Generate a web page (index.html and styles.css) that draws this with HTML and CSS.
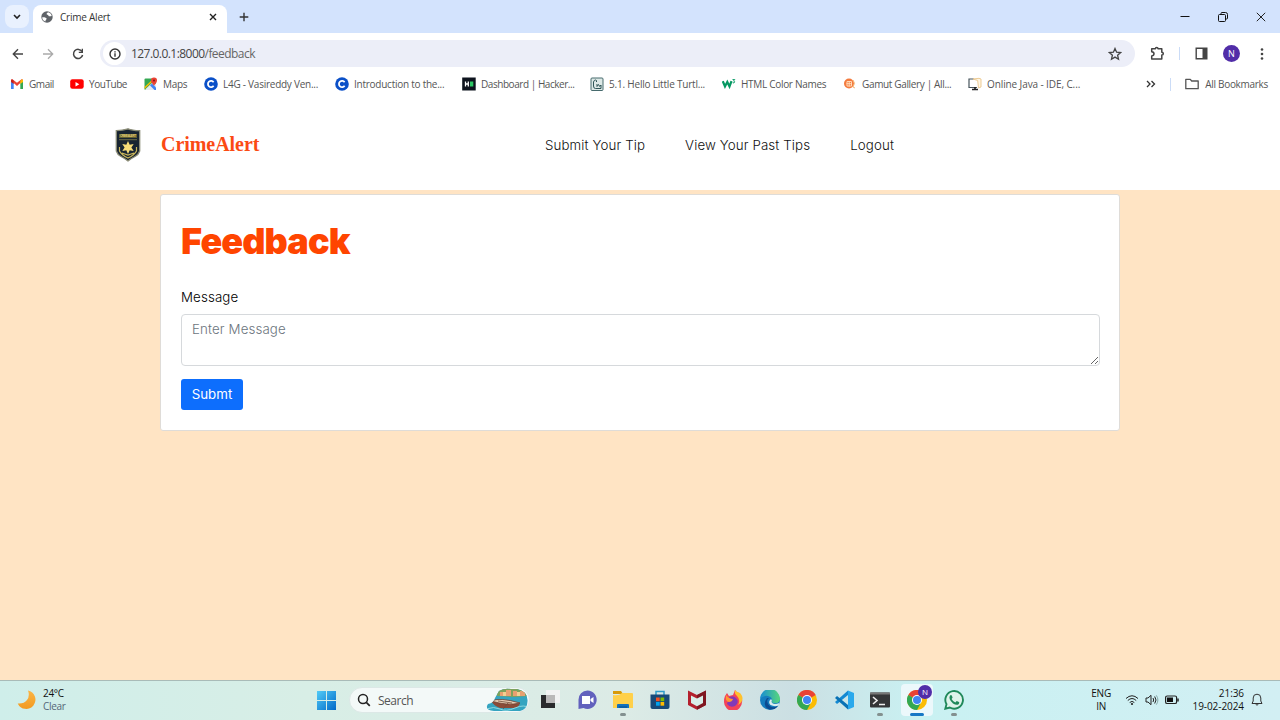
FILE: index.html
```html
<!DOCTYPE html>
<html lang="en">
<head>
<meta charset="utf-8">
<title>Crime Alert</title>
<link rel="stylesheet" href="styles.css">
</head>
<body>
<div class="screen">
  <div class="tabstrip">
    <div class="tab-search"><svg width="8" height="6" viewBox="0 0 8 6"><path d="M1 1l3 3 3-3" fill="none" stroke="#222" stroke-width="1.6"/></svg></div>
    <div class="tab">
      <svg class="globe" width="12" height="12" viewBox="0 0 12 12"><circle cx="6" cy="6" r="5.7" fill="#5f6368"/><path d="M1.2 6.300c1.900-.3 4.300.2 4.400 1.400.1 1-1.200 1-1 2.100l-.3.8C2.400 9.900 1.200 8.300 1.200 6.300zM7 1.300c-.5.8-1.500.7-1.400 1.700.1.900 1.600.4 1.800 1.400.2.900 1.500 1.300 3.300.5C10.400 3.100 9 1.600 7 1.300z" fill="#fff"/></svg>
      <span class="tab-title">Crime Alert</span>
      <svg class="tab-close" width="8" height="8" viewBox="0 0 8 8"><path d="M1 1l6 6M7 1l-6 6" stroke="#222" stroke-width="1.400"/></svg>
    </div>
    <svg class="new-tab" width="10" height="10" viewBox="0 0 10 10"><path d="M5 .7v8.600M.7 5h8.600" stroke="#333" stroke-width="1.400"/></svg>
    <div class="window-buttons">
      <svg width="10" height="10" viewBox="0 0 10 10"><path d="M.5 4.500h9" stroke="#111"/></svg>
      <svg width="10" height="10" viewBox="0 0 10 10"><path d="M3 2V1.500q0-1 1-1h3.500q2 0 2 2V6q0 1-1 1H8M1.500 2.500h5q1 0 1 1v5q0 1-1 1h-5q-1 0-1-1v-5q0-1 1-1z" fill="none" stroke="#111"/></svg>
      <svg width="10" height="10" viewBox="0 0 10 10"><path d="M.8.800l8.400 8.400M9.200.8L.8 9.200" stroke="#222"/></svg>
    </div>
  </div>

  <div class="toolbar">
    <svg class="nav-icon" width="12" height="12" viewBox="0 0 12 12"><path d="M11 6H1.500M6 1.300L1.300 6 6 10.700" fill="none" stroke="#444" stroke-width="1.400"/></svg>
    <svg class="nav-icon" width="12" height="12" viewBox="0 0 12 12"><path d="M1 6h9.500M6 1.300L10.700 6 6 10.700" fill="none" stroke="#aaa" stroke-width="1.300"/></svg>
    <svg class="nav-icon" width="12" height="12" viewBox="0 0 12 12"><path d="M10 3.500A4.600 4.600 0 1 0 10.600 7" fill="none" stroke="#444" stroke-width="1.500"/><path d="M11 .8V5H6.800V3.700H9.700V.8z" fill="#444"/></svg>
    <div class="omnibox">
      <span class="site-info"><svg width="12" height="12" viewBox="0 0 12 12"><circle cx="6" cy="6" r="5" fill="none" stroke="#333" stroke-width="1.400"/><path d="M6 5.300v3.400M6 3.200v1.200" stroke="#333" stroke-width="1.400"/></svg></span>
      <span class="url"><b>127.0.0.1:8000</b>/feedback</span>
      <svg class="star" width="14" height="14" viewBox="0 0 14 14"><path d="M7 1.500l1.600 3.700 4 .4-3 2.600.9 4L7 10.100l-3.500 2.100.9-4-3-2.600 4-.4z" fill="none" stroke="#444" stroke-width="1.300"/></svg>
    </div>
    <div class="tools">
      <svg class="puzzle" width="15" height="15" viewBox="0 0 15 15"><path d="M1.700 2.700h3.700q0-1.300 1.300-1.300T8 2.700h3.800v3.600q1.500 0 1.500 1.400t-1.500 1.400v4H1.700v-3.200q2.300-.4 2.300-2.200t-2.300-2z" fill="none" stroke="#444" stroke-width="1.500" stroke-linejoin="round"/></svg>
      <span class="divider"></span>
      <svg class="panel" width="13" height="13" viewBox="0 0 13 13"><path d="M1.200 1.200h10.600v10.600H1.200z" fill="none" stroke="#444" stroke-width="1.400"/><path d="M7.500 1h4.500v11H7.500z" fill="#444"/></svg>
      <span class="avatar">N</span>
      <svg class="dots" width="4" height="14" viewBox="0 0 4 14"><g fill="#444"><circle cx="2" cy="2.500" r="1.300"/><circle cx="2" cy="7" r="1.300"/><circle cx="2" cy="11.500" r="1.300"/></g></svg>
    </div>
  </div>

  <div class="bookmarks">
    <div class="bm bm-gmail"><svg width="14" height="14" viewBox="0 0 14 14"><path d="M1 3.500V12h2.700V6z" fill="#4285f4"/><path d="M10.300 6v6H13V3.500z" fill="#34a853"/><path d="M1 3.500q0-1.500 1.400-1.300L7 5.800l4.600-3.600Q13 2 13 3.500L7 9z" fill="#ea4335"/><path d="M1 3.500q0-1 1-1.300l1.700 1.500V7L1 5z" fill="#c5221f"/><path d="M10.300 3.700L12 2.200q1 .2 1 1.300V5l-2.700 2z" fill="#fbbc04"/></svg><span>Gmail</span></div>
    <div class="bm bm-youtube"><svg width="14" height="14" viewBox="0 0 14 14"><rect x=".2" y="2.300" width="13.500" height="9.500" rx="2.200" fill="#f00"/><path d="M5.500 5v4.400L9.300 7.200z" fill="#fff"/></svg><span>YouTube</span></div>
    <div class="bm bm-maps"><svg width="14" height="14" viewBox="0 0 14 14"><rect x=".5" y="1.500" width="11.500" height="11.500" rx="1" fill="#34a853"/><path d="M1 12.500L9 5l3 2v5q0 1-1 1H2z" fill="#e8eaed"/><path d="M6 8.500l2-2 4 4V13h-1.500z" fill="#4285f4"/><path d="M.5 10l7.500-7h2L.5 12z" fill="#fbbc04"/><path d="M10 .5a3 3 0 0 1 3 3.200C13 5.800 10.500 7 10 9 9.500 7 7 5.800 7 3.700A3 3 0 0 1 10 .5z" fill="#ea4335"/><circle cx="10" cy="3.600" r="1" fill="#811"/></svg><span>Maps</span></div>
    <div class="bm bm-l4g"><svg width="14" height="14" viewBox="0 0 14 14"><circle cx="7" cy="7" r="6.800" fill="#0b50c8"/><path d="M9.600 5.200a3.100 3.100 0 1 0 0 3.600" fill="none" stroke="#fff" stroke-width="1.800"/></svg><span>L4G - Vasireddy Ven...</span></div>
    <div class="bm bm-intro"><svg width="14" height="14" viewBox="0 0 14 14"><circle cx="7" cy="7" r="6.800" fill="#0b50c8"/><path d="M9.600 5.200a3.100 3.100 0 1 0 0 3.600" fill="none" stroke="#fff" stroke-width="1.800"/></svg><span>Introduction to the...</span></div>
    <div class="bm bm-hacker"><svg width="14" height="14" viewBox="0 0 14 14"><rect x=".2" y=".5" width="13.500" height="13" fill="#0e141e"/><path d="M3.500 4.500v5M6.300 4.500v5M3.500 7h2.800" stroke="#fff" stroke-width="1.300"/><rect x="8" y="4.500" width="3.300" height="5" fill="#2ec866"/></svg><span>Dashboard | Hacker...</span></div>
    <div class="bm bm-turtle"><svg width="14" height="14" viewBox="0 0 14 14"><rect x="1" y="1" width="12" height="12.500" rx="1" fill="#dde9e7" stroke="#466a6d"/><path d="M3.500 9V5q.5-2 2-2t1 2M3.500 9q0 2.500 2 2.500H11V8L9.700 9.500 8.500 7.500 7 9.500V7" fill="none" stroke="#2f5557"/></svg><span>5.1. Hello Little Turtl...</span></div>
    <div class="bm bm-w3"><svg width="14" height="14" viewBox="0 0 14 14"><path d="M.8 4.200l2.200 5.300L5.300 5l2.200 4.500 2-5.300" fill="none" stroke="#059862" stroke-width="2.200"/><path d="M10.500 2.500h2.300L11.500 4q2 .2.500 2l-1.300-.3" fill="none" stroke="#059862" stroke-width=".9"/></svg><span>HTML Color Names</span></div>
    <div class="bm bm-gamut"><svg width="14" height="14" viewBox="0 0 14 14"><circle cx="6" cy="6.500" r="5" fill="#f47b3e"/><path d="M4 4.500h4.500V9H4zM6.200 4v5.500M3.500 6.700H9" fill="none" stroke="#ffe0c0" stroke-width=".9"/><path d="M10 3q3 3 0 7l2 1" fill="none" stroke="#f5b878"/></svg><span>Gamut Gallery | All...</span></div>
    <div class="bm bm-java"><svg width="14" height="14" viewBox="0 0 14 14"><path d="M6 2H1v8.500h8" fill="none" stroke="#47545c" stroke-width="1.200"/><path d="M4 12.500h6M7 10v2" stroke="#222" stroke-width="1.700"/><path d="M5 2l6-.7 2 .7v8l-2.500 1L9.700 3.500z" fill="#fff6e3" stroke="#edcb95"/></svg><span>Online Java - IDE, C...</span></div>
    <div class="bm-end">
      <svg width="10" height="8" viewBox="0 0 10 8"><path d="M1 1l3 3-3 3M5.500 1l3 3-3 3" fill="none" stroke="#333" stroke-width="1.300"/></svg>
      <span class="divider"></span>
      <svg class="folder" width="14" height="12" viewBox="0 0 14 12"><path d="M.8 1.300h4.500L6.700 3h6.500v7.700H.8z" fill="none" stroke="#555" stroke-width="1.300" stroke-linejoin="round"/></svg>
      <span class="all">All Bookmarks</span>
    </div>
  </div>

  <header class="site-header">
    <svg class="badge" width="26" height="34" viewBox="0 0 26 34"><path d="M13 .8C9 2 5 2.500 1.300 2.700V23q1 3.500 4.700 5.500Q10 30.500 13 33q3-2.500 7-4.500 3.700-2 4.700-5.500V2.700Q17 2.500 13 .8z" fill="#182431" stroke="#8b8c76" stroke-width="1.300"/><path d="M4 6h18v4H4z" fill="#62602f"/><text x="5" y="9.300" class="badge-text" textLength="16">CRIME ALERT</text><path d="M4 11.700h18" stroke="#948d4e" stroke-width=".7"/><path d="M4.500 19v4q2 4 8.500 7 6.500-3 8.500-7v-4M7 25l6 2 6-2" fill="none" stroke="#c9b65b" stroke-width="1.200"/><path d="M13 13l1.700 3.700 4-.7-2.300 3.500 2.300 3.500-4-.7L13 26l-1.700-3.700-4 .7 2.300-3.500L7.300 16l4 .7z" fill="#f6dc78"/></svg>
    <span class="brand">CrimeAlert</span>
    <nav class="site-nav"><a>Submit Your Tip</a><a>View Your Past Tips</a><a>Logout</a></nav>
  </header>

  <main class="page">
    <form class="card">
      <h1>Feedback</h1>
      <label for="message">Message</label>
      <textarea id="message" placeholder="Enter Message"></textarea>
      <button type="button">Submt</button>
    </form>
  </main>

  <footer class="taskbar">
    <svg class="moon" width="20" height="20" viewBox="0 0 20 20"><defs><linearGradient id="moon" x1="0" y1="0" x2="0" y2="1"><stop stop-color="#fbb546"/><stop offset="1" stop-color="#f29a20"/></linearGradient></defs><path d="M11 .5A9.300 9.300 0 1 1 .7 13.500Q7 14 10 10t1-9.500z" fill="url(#moon)"/></svg>
    <div class="weather"><span>24°C</span><span class="muted">Clear</span></div>
    <svg class="start" width="19" height="19" viewBox="0 0 19 19"><defs><linearGradient id="win" x1="0" y1="0" x2="1" y2="1"><stop stop-color="#52cbf7"/><stop offset="1" stop-color="#0069c8"/></linearGradient></defs><path d="M0 0h9v9H0zM10 0h9v9h-9zM0 10h9v9H0zM10 10h9v9h-9z" fill="url(#win)"/></svg>
    <div class="search">
      <svg width="14" height="14" viewBox="0 0 14 14"><circle cx="6" cy="6" r="4.500" fill="none" stroke="#222" stroke-width="1.500"/><path d="M9.300 9.300l3.500 3.500" stroke="#222" stroke-width="1.700"/></svg>
      <span>Search</span>
      <svg class="boat" width="42" height="24" viewBox="0 0 42 24"><defs><clipPath id="scene"><path d="M13 3Q18 0 25 1h6Q41 3 41.500 12T34 23H8Q-2 22 2 16q6-1 7-6z"/></clipPath></defs><g clip-path="url(#scene)"><path d="M0 0h42v24H0z" fill="#35a4c0"/><path d="M10 0h32v8L28 9 11 8z" fill="#7ea25c"/><path d="M14 4h4v4h-4zM20 2h5v6h-5zM27 3h4v5h-4zM34 3h5v5h-5z" fill="#e7a070"/><path d="M17 4h3v4h-3zM31 4h3v4h-3z" fill="#f2cf91"/><path d="M5 13q15 4 29 2-1 5-7 5H14Q8 18 5 13z" fill="#8b4b38"/><path d="M5 13q9-4 29 2-12 3-29-2z" fill="#e9cdb4" stroke="#73402e" stroke-width=".8"/><path d="M12 13l14 2M22 15l-5 6" stroke="#714b38" stroke-width=".8"/><path d="M0 21q8-3 14 0t15-1 15 0" stroke="#8ed8df" fill="none"/></g></svg>
    </div>
    <div class="apps">
      <div class="app"><svg width="20" height="20" viewBox="0 0 20 20"><path d="M1 5h14v13H1z" fill="#292b2d"/><path d="M6 0h14v13H6z" fill="#f5f5f5" opacity=".85"/><path d="M6 5h9v8H6z" fill="#b9b9b9"/></svg></div>
      <div class="app"><svg width="20" height="20" viewBox="0 0 20 20"><path d="M10.500.5a9.200 9.200 0 1 1-4 17.500L1.500 19V10A9.200 9.200 0 0 1 10.500.5z" fill="#6261bd"/><path d="M5 6h8v8H5zM13.500 9L16.500 7v6l-3-2z" fill="#fff"/></svg></div>
      <div class="app running"><svg width="20" height="20" viewBox="0 0 20 20"><path d="M0 1h8l2 3H0z" fill="#d89a09"/><path d="M0 5q6 1 9-2h10q1 0 1 1v14H0z" fill="#ffd04a"/><path d="M4 18v-3q0-1 1-1h10q1 0 1 1v3z" fill="#1371bd"/><path d="M6 17h8" stroke="#084f8d"/></svg></div>
      <div class="app"><svg width="20" height="20" viewBox="0 0 20 20"><path d="M6 5V1.500h8V5" fill="none" stroke="#2d9cca" stroke-width="1.500"/><path d="M.5 4.500h19V17q0 2-2 2h-15q-2 0-2-2z" fill="#174a79"/><path d="M6 7.500h3.700v3.700H6z" fill="#f25022"/><path d="M10.500 7.500h3.700v3.700h-3.700z" fill="#7fba00"/><path d="M6 12h3.700v3.700H6z" fill="#00a4ef"/><path d="M10.500 12h3.700v3.700h-3.700z" fill="#ffb900"/></svg></div>
      <div class="app"><svg width="20" height="20" viewBox="0 0 20 20"><path d="M1 .5l9 4.500 9-4.500V15l-9 4.800L1 15z" fill="#b4202d"/><path d="M10 5l9-4.500V15l-9 4.800z" fill="#7f1721"/><path d="M4 5.500l6 3 6-3V13l-6 3.200L4 13z" fill="#d9eee9"/></svg></div>
      <div class="app"><svg width="20" height="20" viewBox="0 0 20 20"><path d="M2 6l2-3 2 3 4-1 2-5q2 3 4 3 4 6 3 9a9 9 0 0 1-18 0q0-4 1-6z" fill="#f34459"/><path d="M12 0q-1 4 2 6 4 4 1 9 6-4 4-9-1-2-2-3-4-1-5-3z" fill="#ffc12d"/><path d="M4 9q5-5 9-1 4 4-1 8-5 2-8-2 0-2 2-3z" fill="#8139b8"/><path d="M3 5q3 4 7 4-1 3-4 3-4 0-3-7z" fill="#ff9830"/></svg></div>
      <div class="app"><svg width="20" height="20" viewBox="0 0 20 20"><defs><linearGradient id="edge"><stop stop-color="#168cd4"/><stop offset="1" stop-color="#58d77b"/></linearGradient></defs><circle cx="10" cy="10" r="10" fill="#147cbe"/><path d="M0 9a10 10 0 0 1 20 0q0 5-7 4-2-1-1-3 0-3-4-4T0 9z" fill="url(#edge)"/><path d="M9 8q-3 2-1 6 3 5 10 2-4 5-10 3-6-4-1-11z" fill="#0c4b91"/><path d="M11 9q1.500 1 .5 3 1.500 3.500 8 1l-1 2.500q-4 1.500-8-.5-3-3 .5-6z" fill="#dceeee"/></svg></div>
      <div class="app"><svg width="20" height="20" viewBox="0 0 20 20"><circle cx="10" cy="10" r="10" fill="#fbbc05"/><path d="M10 10L1.300 5A10 10 0 0 1 18.700 5z" fill="#ea4335"/><path d="M1.300 5A10 10 0 0 0 10 20l4.300-8L10 10z" fill="#34a853"/><circle cx="10" cy="10" r="5" fill="#fff"/><circle cx="10" cy="10" r="4" fill="#4285f4"/></svg></div>
      <div class="app"><svg width="20" height="20" viewBox="0 0 20 20"><path d="M14 5L3 14l-2-2L14 .5z" fill="#1389d2"/><path d="M14 15L3 6 1 8l13 11.500z" fill="#0872b5"/><path d="M14 .5L20 3v14l-6 2.500z" fill="#2aa9ec"/></svg></div>
      <div class="app running"><svg width="20" height="20" viewBox="0 0 20 20"><rect y="2.500" width="20" height="15" rx="1" fill="#343638"/><path d="M0 4.500v-2h20v2z" fill="#777"/><path d="M3 7l4 3.500L3 14M9 14.500h6" fill="none" stroke="#eee" stroke-width="1.600"/></svg></div>
      <div class="app active"><svg width="20" height="20" viewBox="0 0 20 20"><circle cx="10" cy="10" r="10" fill="#fbbc05"/><path d="M10 10L1.300 5A10 10 0 0 1 18.700 5z" fill="#ea4335"/><path d="M1.300 5A10 10 0 0 0 10 20l4.300-8L10 10z" fill="#34a853"/><circle cx="10" cy="10" r="5" fill="#fff"/><circle cx="10" cy="10" r="4" fill="#4285f4"/></svg><span class="profile">N</span></div>
      <div class="app running"><svg width="20" height="20" viewBox="0 0 20 20"><path d="M1.300 18.700l1.200-4.500a8.800 8.800 0 1 1 3.300 3.300z" fill="#dff3eb" stroke="#20885a" stroke-width="1.900"/><path d="M6 5.500q1-1 1.800 0l.8 2-1 1.400q1.200 2.500 3.800 3.500l1.300-1.300 2.300 1q.7.500-.2 1.900-2 2-5.800-.6Q4 9 6 5.500z" fill="#20885a"/></svg></div>
    </div>
    <div class="language"><span>ENG</span><span>IN</span></div>
    <div class="status">
      <svg width="14" height="12" viewBox="0 0 14 12"><path d="M1 4.500q6-5.500 12 0M2.800 6.500q4.200-4 8.400 0M4.700 8.500q2.300-2.200 4.600 0" fill="none" stroke="#222"/><circle cx="7" cy="10" r="1.100" fill="#222"/></svg>
      <svg width="14" height="12" viewBox="0 0 14 12"><path d="M1 4h2l3-2.700v9.400L3 8H1z" fill="none" stroke="#222"/><path d="M8 4q1.300 2 0 4M9.700 2.500q2.600 3.500 0 7" fill="none" stroke="#222"/><path d="M11.300 1.300q3.200 4.700 0 9.400" fill="none" stroke="#8aa"/></svg>
      <svg width="14" height="12" viewBox="0 0 14 12"><rect x=".6" y="2" width="11" height="7.500" rx="1.600" fill="none" stroke="#222" stroke-width="1.200"/><path d="M2 3.500h6V8H2z" fill="#111"/><path d="M13 4.500v3" stroke="#222" stroke-width="1.500"/></svg>
    </div>
    <div class="clock"><span>21:36</span><span>19-02-2024</span></div>
    <svg class="bell" width="12" height="14" viewBox="0 0 12 14"><path d="M1 10.500h10L9.800 8V5a3.800 3.800 0 0 0-7.600 0v3zM4.500 11q1.500 2.500 3 0" fill="none" stroke="#333"/></svg>
  </footer>
</div>
</body>
</html>
```
FILE: styles.css
```css
* { box-sizing: border-box; }
body { margin: 0; }
svg { display: block; flex: none; }
.screen { width: 1280px; height: 720px; display: flex; flex-direction: column; overflow: hidden; background: #fff; font: 10px/13px "Open Sans", "Noto Sans", sans-serif; color: #333; }
.tabstrip { height: 45px; flex: none; display: flex; background: linear-gradient(#d3e3fd 0 33px, #fff 33px); padding-left: 5px; }
.tab-search { width: 24px; height: 23px; margin-top: 5px; border-radius: 8px; background: #e9f1fe; display: flex; align-items: center; justify-content: center; }
.tab { width: 194px; height: 28px; margin: 5px 0 0 4px; padding: 0 10px 4px 8px; display: flex; align-items: center; background: #fff; border-radius: 8px 8px 0 0; }
.tab-title { margin-left: 7px; letter-spacing: -.23px; }
.tab-close { margin-left: auto; }
.new-tab { margin: 12px 0 0 12px; }
.window-buttons { margin: 12px 14px 0 auto; display: flex; gap: 28px; }
.toolbar { height: 27px; flex: none; margin-top: -5px; padding-left: 12px; display: flex; align-items: center; }
.nav-icon { margin-right: 18px; }
.nav-icon:nth-child(3) { margin-right: 16px; }
.omnibox { width: 1035px; height: 27px; border-radius: 14px; background: #eceef8; display: flex; align-items: center; padding: 0 13px 0 3px; }
.site-info { width: 23px; height: 23px; background: #fff; border-radius: 50%; display: flex; align-items: center; justify-content: center; }
.url { margin-left: 5px; font-size: 12px; letter-spacing: -.55px; color: #666; }
.url b { font-weight: 400; color: #444; }
.star { margin-left: auto; }
.tools { flex: 1; display: flex; align-items: center; padding-left: 15px; }
.divider { width: 1px; height: 13px; background: #cbdcf7; }
.puzzle { margin-right: 14px; }
.panel { margin-left: 15px; }
.avatar { width: 17px; height: 17px; margin-left: 15px; border-radius: 50%; background: #512da8; color: #fff; font-size: 9px; line-height: 17px; text-align: center; }
.dots { margin-left: 20px; }
.bookmarks { height: 31px; flex: none; display: flex; align-items: center; padding: 3px 12px 0 10px; white-space: nowrap; letter-spacing: -.3px; color: #555; }
.bm { display: flex; align-items: center; gap: 5px; flex: none; }
.bm-gmail { width: 60px; }
.bm-youtube { width: 74px; }
.bm-youtube, .bm-hacker, .bm-gmail { letter-spacing: -.45px; }
.bm-maps { width: 60px; }
.bm-l4g { width: 131px; letter-spacing: -.25px; }
.bm-intro { width: 127px; letter-spacing: -.25px; }
.bm-hacker { width: 128px; }
.bm-turtle { width: 132px; letter-spacing: -.2px; }
.bm-w3 { width: 121px; }
.bm-gamut { width: 125px; letter-spacing: -.35px; }
.bm-java { width: 120px; letter-spacing: -.1px; }
.bm-end { margin-left: auto; display: flex; align-items: center; }
.bm-end .divider { margin: 0 14px; }
.folder { margin-right: 6px; }

.site-header { height: 92px; flex: none; padding: 0 0 1px 115px; display: flex; align-items: center; }
.badge { margin-top: 2px; }
.badge-text { font: bold 3px "Liberation Sans", sans-serif; fill: #e0cc75; }
.brand { margin-left: 20px; width: 384px; font: bold 20px/24px "Liberation Serif", serif; letter-spacing: -.05px; color: #fb4a14; }
.site-nav { display: flex; gap: 40px; margin-top: 2px; font: 300 13.300px/20px Inter, sans-serif; letter-spacing: .12px; color: #111; }
.page { flex: 1; background: #ffe4c4; padding-top: 4px; }
.card { width: 960px; height: 237px; margin: 0 auto; padding: 20px; background: #fff; border: 1px solid #dfdcd8; border-radius: 3px; display: flex; flex-direction: column; align-items: flex-start; font: 13.300px/20px Inter, sans-serif; color: #111; }
.card h1 { margin: 4px 0 0; font-size: 36px; font-weight: 900; line-height: 44px; letter-spacing: -.9px; color: #ff4500; }
.card label { margin-top: 24px; font-weight: 300; letter-spacing: .12px; color: #000; }
.card textarea { width: 919px; height: 52px; margin-top: 7px; padding: 4px 10px; border: 1px solid #d6d9dc; border-radius: 4px; font: 300 13.300px/20px Inter, sans-serif; letter-spacing: .12px; resize: vertical; overflow: hidden; }
.card textarea::placeholder { color: #6c757d; opacity: 1; }
.card button { width: 62px; height: 31px; margin-top: 13px; padding: 0 0 1px; border: 0; border-radius: 3px; background: #0d6efd; color: #fff; font: 13.300px/20px Inter, sans-serif; }

.taskbar { height: 40px; flex: none; border-top: 1px solid #a9bbb8; background: linear-gradient(90deg, #cfeeea, #d8eee6 24%, #dcebe6 49%, #cbdfe3 62%, #c9f1f2 72%, #d2eff3); display: flex; align-items: center; padding: 0 0 1px 17px; color: #111; letter-spacing: -.2px; }
.weather, .language, .clock { display: flex; flex-direction: column; }
.weather { width: 74px; margin-left: 6px; letter-spacing: -.3px; }
.muted { color: #567; }
.start { margin-left: 200px; }
.search { width: 181px; height: 26px; margin-left: 13px; border: 1px solid #dce8e6; border-radius: 13px; background: #f3f9f8; display: flex; align-items: center; padding: 0 1px 0 7px; font-size: 12px; letter-spacing: -.5px; color: #555; }
.search span { margin-left: 7px; }
.boat { margin-left: auto; }
.apps { display: flex; margin-left: 4px; gap: 4.700px; }
.app { position: relative; width: 32px; height: 32px; border-radius: 4px; display: flex; align-items: center; justify-content: center; }
.active { background: #ecf8fb; }
.running::after, .active::after { content: ""; position: absolute; bottom: 0; left: 13px; width: 6px; height: 3px; border-radius: 2px; background: #83908f; }
.active::after { left: 9px; width: 14px; background: #1677c5; }
.profile { position: absolute; top: 1px; right: 1px; width: 14px; height: 14px; border-radius: 50%; background: #512da8; color: #fff; font-size: 8px; line-height: 14px; text-align: center; }
.language { margin-left: auto; text-align: center; }
.status { display: flex; gap: 6px; margin-left: 14px; }
.clock { width: 56px; margin-left: 9px; text-align: right; letter-spacing: -.07px; }
.bell { margin: 0 17px 0 7px; }
```
